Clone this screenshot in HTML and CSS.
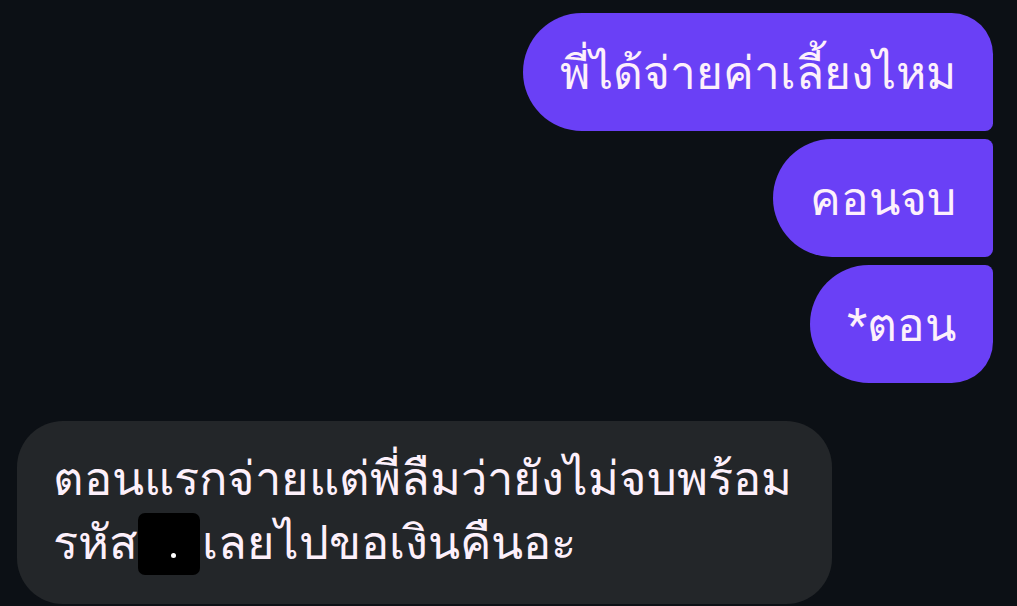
FILE: index.html
```html
<!DOCTYPE html>
<html lang="th">
<head>
<meta charset="utf-8">
<link rel="stylesheet" href="styles.css">
</head>
<body>
<div class="chat">
  <div class="out">
    <div class="bubble me first">พี่ได้จ่ายค่าเลี้ยงไหม</div>
    <div class="bubble me mid">คอนจบ</div>
    <div class="bubble me last">*ตอน</div>
  </div>
  <div class="in">
    <div class="bubble them">ตอนแรกจ่ายแต่พี่ลืมว่ายังไม่จบพร้อม<br>รหัส<span class="redact"><span class="dot"></span></span>เลยไปขอเงินคืนอะ</div>
  </div>
</div>
</body>
</html>
```
FILE: styles.css
```css
html, body {
  margin: 0;
  padding: 0;
  background: #0c1015;
  width: 1017px;
  height: 606px;
  overflow: hidden;
}
.chat {
  display: flex;
  flex-direction: column;
  padding: 13px 24px 0 17px;
  color: #fdf0fb;
}
.out {
  display: flex;
  flex-direction: column;
  align-items: flex-end;
  gap: 8px;
  font-family: "Roboto", "DejaVu Sans", sans-serif;
}
.bubble {
  box-sizing: border-box;
  white-space: nowrap;
}
.me {
  font-size: 46px;
  background: #6a40f6;
  height: 118px;
  display: flex;
  align-items: center;
  padding: 0 37px 0 37px;
}
.first { border-radius: 60px 42px 8px 60px; }
.mid { border-radius: 60px 8px 8px 60px; }
.last { border-radius: 60px 8px 42px 60px; }
.in {
  margin-top: 38px;
  display: flex;
  font-family: "Liberation Sans", serif;
}
.them {
  font-size: 47px;
  background: #232629;
  border-radius: 46px;
  width: 815px;
  height: 183px;
  padding: 26px 36px 0 36px;
  line-height: 64px;
}
.redact {
  display: inline-block;
  width: 62px;
  height: 62px;
  margin: 0 2px 0 0;
  background: #000;
  border-radius: 7px;
  vertical-align: -16px;
  position: relative;
}
.dot {
  position: absolute;
  left: 33px;
  top: 40px;
  width: 5px;
  height: 5px;
  border-radius: 50%;
  background: #fff;
}
```
